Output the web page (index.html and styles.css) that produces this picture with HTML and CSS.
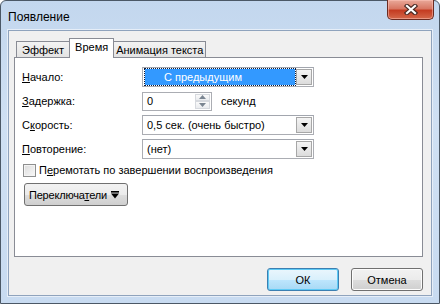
FILE: index.html
```html
<!DOCTYPE html>
<html lang="ru">
<head>
  <meta charset="UTF-8" />
  <title>Появление</title>
  <link rel="stylesheet" href="styles.css">
</head>
<body>
  <div class="window">
    <div class="titlebar">
      <span class="title">Появление</span>
      <button class="close" aria-label="Закрыть">
        <svg width="14" height="11" viewBox="0 0 14 11">
          <path d="M3 2 L11 9 M11 2 L3 9" stroke="#4a2a24" stroke-width="4.4" stroke-linecap="square" fill="none"/>
          <path d="M3 2 L11 9 M11 2 L3 9" stroke="#ffffff" stroke-width="2.2" stroke-linecap="square" fill="none"/>
        </svg>
      </button>
    </div>

    <div class="client">
      <div class="tabs">
        <div class="tab">Эффект</div>
        <div class="tab active">Время</div>
        <div class="tab tight">Анимация текста</div>
      </div>

      <div class="panel">
        <div class="form">
          <label class="label"><u>Н</u>ачало:</label>
          <div class="combo">
            <span class="value selected">С предыдущим</span>
            <span class="drop"><svg width="7" height="4" viewBox="0 0 7 4"><path d="M0 0 H7 L3.5 4 Z" fill="#000"/></svg></span>
          </div>

          <label class="label"><u>З</u>адержка:</label>
          <div class="spin-row">
            <div class="spin">
              <span class="value">0</span>
              <span class="spin-btns">
                <span class="spin-btn"><svg width="7" height="4" viewBox="0 0 7 4"><path d="M0 4 H7 L3.5 0 Z" fill="#7a8591"/></svg></span>
                <span class="spin-btn"><svg width="7" height="4" viewBox="0 0 7 4"><path d="M0 0 H7 L3.5 4 Z" fill="#7a8591"/></svg></span>
              </span>
            </div>
            <span class="unit">секунд</span>
          </div>

          <label class="label">С<u>к</u>орость:</label>
          <div class="combo">
            <span class="value">0,5 сек. (очень быстро)</span>
            <span class="drop"><svg width="7" height="4" viewBox="0 0 7 4"><path d="M0 0 H7 L3.5 4 Z" fill="#000"/></svg></span>
          </div>

          <label class="label"><u>П</u>овторение:</label>
          <div class="combo">
            <span class="value">(нет)</span>
            <span class="drop"><svg width="7" height="4" viewBox="0 0 7 4"><path d="M0 0 H7 L3.5 4 Z" fill="#000"/></svg></span>
          </div>
        </div>

        <label class="check">
          <span class="box"></span>
          <span>П<u>е</u>ремотать по завершении воспроизведения</span>
        </label>

        <button class="toggle">
          <span>Переключа<u>т</u>ели</span>
          <svg width="8" height="8" viewBox="0 0 8 8"><rect x="0" y="0" width="8" height="1.6" fill="#000"/><path d="M0 2.6 H8 L4 7.6 Z" fill="#000"/></svg>
        </button>
      </div>

      <div class="actions">
        <button class="btn default">ОК</button>
        <button class="btn">Отмена</button>
      </div>
    </div>
  </div>
</body>
</html>
```

FILE: styles.css
```css
* {
  box-sizing: border-box;
}

body {
  margin: 0;
  background: #ffffff;
  font-family: 'Liberation Sans', Arial, sans-serif;
  font-size: 11px;
  color: #000;
}

u {
  text-decoration: underline;
  text-underline-offset: 1px;
}

.window {
  width: 440px;
  height: 304px;
  display: flex;
  flex-direction: column;
  padding: 0 7px 7px 7px;
  border: 1px solid #4b5866;
  border-radius: 6px 6px 0 0;
  background: linear-gradient(to bottom, #c3d7ee 0%, #cfe0f3 40%, #c8dbf1 100%);
}

.titlebar {
  height: 29px;
  display: flex;
  align-items: flex-start;
}

.title {
  margin-top: 9px;
  font-size: 12px;
  color: #000;
}

.close {
  margin-left: auto;
  margin-top: -1px;
  margin-right: -2px;
  width: 47px;
  height: 20px;
  padding: 0;
  display: flex;
  align-items: center;
  justify-content: center;
  border: 1px solid #6b2b21;
  border-top: none;
  border-radius: 0 0 5px 5px;
  background: linear-gradient(to bottom, #e9a99a 0%, #d87763 45%, #c43c22 55%, #d4684a 100%);
  box-shadow: inset 0 0 0 1px rgba(255, 200, 190, 0.5);
}

.client {
  flex: 1;
  display: flex;
  flex-direction: column;
  padding: 7px 8px 4px 5px;
  background: #f0f0f0;
  border: 1px solid #8fa3bd;
  box-shadow: 0 0 0 1px #e6eef8;
}

.tabs {
  height: 19px;
  display: flex;
  align-items: flex-end;
  margin-left: 2px;
}

.tab {
  height: 16px;
  padding: 0 5px;
  display: flex;
  align-items: center;
  border: 1px solid #898c95;
  border-bottom: none;
  margin-right: -1px;
  background: linear-gradient(to bottom, #f3f3f3, #e3e3e3);
  white-space: nowrap;
}

.tab.tight {
  padding: 0 2px;
}

.tab.active {
  height: 20px;
  margin-bottom: -1px;
  padding: 0 5px 3px 5px;
  background: #ffffff;
  position: relative;
  z-index: 1;
}

.panel {
  height: 200px;
  padding: 9px 7px;
  background: #ffffff;
  border: 1px solid #898c95;
}

.form {
  display: grid;
  grid-template-columns: 120px 172px;
  grid-auto-rows: 20px;
  row-gap: 4px;
  align-items: center;
}

.combo {
  height: 20px;
  display: flex;
  align-items: center;
  padding: 1px;
  border: 1px solid #abadb3;
  border-top-color: #a2a6ae;
  background: #ffffff;
}

.combo .value {
  flex: 1;
  height: 16px;
  line-height: 16px;
  padding-left: 3px;
  white-space: nowrap;
}

.combo .value.selected {
  margin: 0 1px 0 1px;
  padding-left: 19px;
  background: #3399ff;
  color: #ffffff;
  outline: 1px dotted #0a1a3a;
}

.drop {
  width: 16px;
  height: 16px;
  display: flex;
  align-items: center;
  justify-content: center;
  border: 1px solid #a7a7a7;
  background: linear-gradient(to bottom, #f4f4f4, #dcdcdc);
}

.spin-row {
  display: flex;
  align-items: center;
  gap: 9px;
}

.spin {
  width: 70px;
  height: 19px;
  display: flex;
  align-items: stretch;
  border: 1px solid #abadb3;
  background: #ffffff;
  padding: 1px;
}

.spin .value {
  flex: 1;
  padding-left: 3px;
  line-height: 15px;
}

.spin-btns {
  width: 15px;
  display: flex;
  flex-direction: column;
}

.spin-btn {
  flex: 1;
  display: flex;
  align-items: center;
  justify-content: center;
  border: 1px solid #d6d9de;
  background: linear-gradient(to bottom, #fafafa, #eaecef);
}

.check {
  margin-top: 4px;
  margin-left: 1px;
  height: 14px;
  display: flex;
  align-items: center;
  gap: 3px;
}

.box {
  width: 13px;
  height: 13px;
  border: 1px solid #8e8f8f;
  background: linear-gradient(135deg, #dcdcdc, #f8f8f8);
  box-shadow: inset 0 0 0 1px #f4f4f4;
}

.toggle {
  margin-top: 6px;
  margin-left: 2px;
  width: 104px;
  height: 23px;
  padding: 0 4px;
  display: flex;
  align-items: center;
  gap: 4px;
  font-family: inherit;
  font-size: 11px;
  letter-spacing: -0.2px;
  color: #000;
  border: 1px solid #707070;
  border-radius: 3px;
  background: linear-gradient(to bottom, #f2f2f2 0%, #ebebeb 50%, #dddddd 51%, #cfcfcf 100%);
}

.actions {
  margin-top: 11px;
  display: flex;
  justify-content: flex-end;
  gap: 12px;
}

.btn {
  width: 72px;
  height: 23px;
  padding: 0;
  font-family: inherit;
  font-size: 11px;
  color: #000;
  border: 1px solid #707070;
  border-radius: 3px;
  background: linear-gradient(to bottom, #f2f2f2 0%, #ebebeb 50%, #dddddd 51%, #cfcfcf 100%);
  box-shadow: inset 0 0 0 1px #fcfcfc;
}

.btn.default {
  border-color: #3c7fb1;
  background: linear-gradient(to bottom, #eaf6fd 0%, #d9f0fc 50%, #bee6fd 51%, #a7d9f5 100%);
  box-shadow: inset 0 0 0 1px #5ecaf5;
}
```
